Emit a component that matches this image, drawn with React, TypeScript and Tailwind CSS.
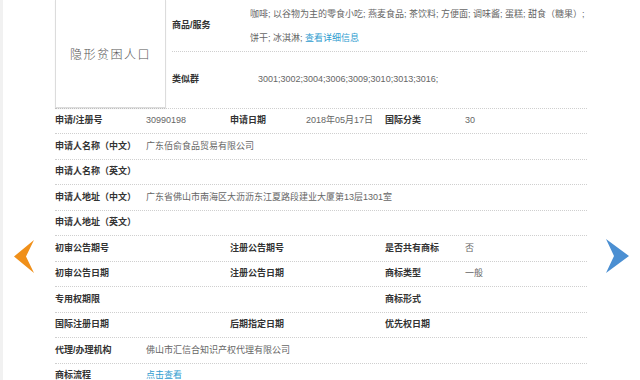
import React from "react";

const FONT = { fontFamily: '"Liberation Sans", "Noto Sans CJK SC", sans-serif' };

type Cell = { t?: string; kind: "l" | "v" | "a" };

const W = ["w-[91px]", "w-[84px]", "w-[76px]", "w-[79px]", "w-[80px]", "flex-1"];

function Row({ cells, span }: { cells: Cell[]; span?: boolean }) {
  return (
    <div className="flex h-[25.5px] items-center border-b border-dotted border-[#cfcfcf]">
      {cells.map((c, i) => {
        const width = span && i === 1 ? "flex-1" : W[i];
        const cls =
          c.kind === "l"
            ? "font-bold text-[#333]"
            : c.kind === "a"
            ? "text-[#2f9ccf]"
            : "text-[#666]";
        return (
          <div key={i} className={`${width} shrink-0 whitespace-nowrap ${cls}`}>
            {c.t ?? ""}
          </div>
        );
      })}
    </div>
  );
}

const L = (t: string): Cell => ({ t, kind: "l" });
const V = (t?: string): Cell => ({ t, kind: "v" });

export default function App() {
  return (
    <div className="relative h-[380px] w-[640px] overflow-hidden bg-white text-[9px] leading-none" style={FONT}>
      <div className="absolute left-0 top-0 h-full w-[3px] bg-[#f1f1f1]" />

      {/* arrows */}
      <svg className="absolute left-[13px] top-[239px]" width="24" height="35" viewBox="0 0 24 35">
        <polygon points="21,1 1,17.5 21,34 13,17.5" fill="#f0901a" />
      </svg>
      <svg className="absolute left-[604px] top-[238px]" width="26" height="36" viewBox="0 0 26 36">
        <polygon points="2,1 25,18 2,35 10,18" fill="#4b8fd2" />
      </svg>

      <div className="relative ml-[55px] flex w-[532px] flex-col">
        {/* top section */}
        <div className="flex h-[108.5px] border-b border-dotted border-[#cfcfcf]">
          <div className="flex h-[108px] w-[111px] shrink-0 items-center justify-center border-x border-b border-[#dcdcdc] shadow-[0_1px_1px_rgba(0,0,0,0.08)]">
            <span className="text-[12px] tracking-[1.5px] text-[#555]" style={{ fontFamily: '"Noto Sans CJK SC", sans-serif', fontWeight: 300 }}>
              隐形贫困人口
            </span>
          </div>
          <div className="flex flex-1 flex-col pl-[6px]">
            <div className="flex h-[52px] items-center border-b border-dotted border-[#cfcfcf]">
              <div className="w-[78px] shrink-0 font-bold text-[#333]">商品/服务</div>
              <div className="flex flex-col text-[#666]">
                <div className="h-[24px] whitespace-nowrap leading-[24px]">
                  咖啡; 以谷物为主的零食小吃; 燕麦食品; 茶饮料; 方便面; 调味酱; 蛋糕; 甜食（糖果）;
                </div>
                <div className="h-[24px] whitespace-nowrap leading-[24px]">
                  饼干; 冰淇淋; <span className="text-[#2f9ccf]">查看详细信息</span>
                </div>
              </div>
            </div>
            <div className="flex flex-1 items-center">
              <div className="w-[86px] shrink-0 font-bold text-[#333]">类似群</div>
              <div className="text-[#666]">3001;3002;3004;3006;3009;3010;3013;3016;</div>
            </div>
          </div>
        </div>

        <Row cells={[L("申请/注册号"), V("30990198"), L("申请日期"), V("2018年05月17日"), L("国际分类"), V("30")]} />
        <Row span cells={[L("申请人名称（中文）"), V("广东佰俞食品贸易有限公司")]} />
        <Row span cells={[L("申请人名称（英文）"), V("")]} />
        <Row span cells={[L("申请人地址（中文）"), V("广东省佛山市南海区大沥沥东江夏路段建业大厦第13层1301室")]} />
        <Row span cells={[L("申请人地址（英文）"), V("")]} />
        <Row cells={[L("初审公告期号"), V(), L("注册公告期号"), V(), L("是否共有商标"), V("否")]} />
        <Row cells={[L("初审公告日期"), V(), L("注册公告日期"), V(), L("商标类型"), V("一般")]} />
        <Row cells={[L("专用权期限"), V(), V(), V(), L("商标形式"), V()]} />
        <Row cells={[L("国际注册日期"), V(), L("后期指定日期"), V(), L("优先权日期"), V()]} />
        <Row span cells={[L("代理/办理机构"), V("佛山市汇信合知识产权代理有限公司")]} />
        <Row span cells={[L("商标流程"), { t: "点击查看", kind: "a" }]} />
      </div>
    </div>
  );
}
